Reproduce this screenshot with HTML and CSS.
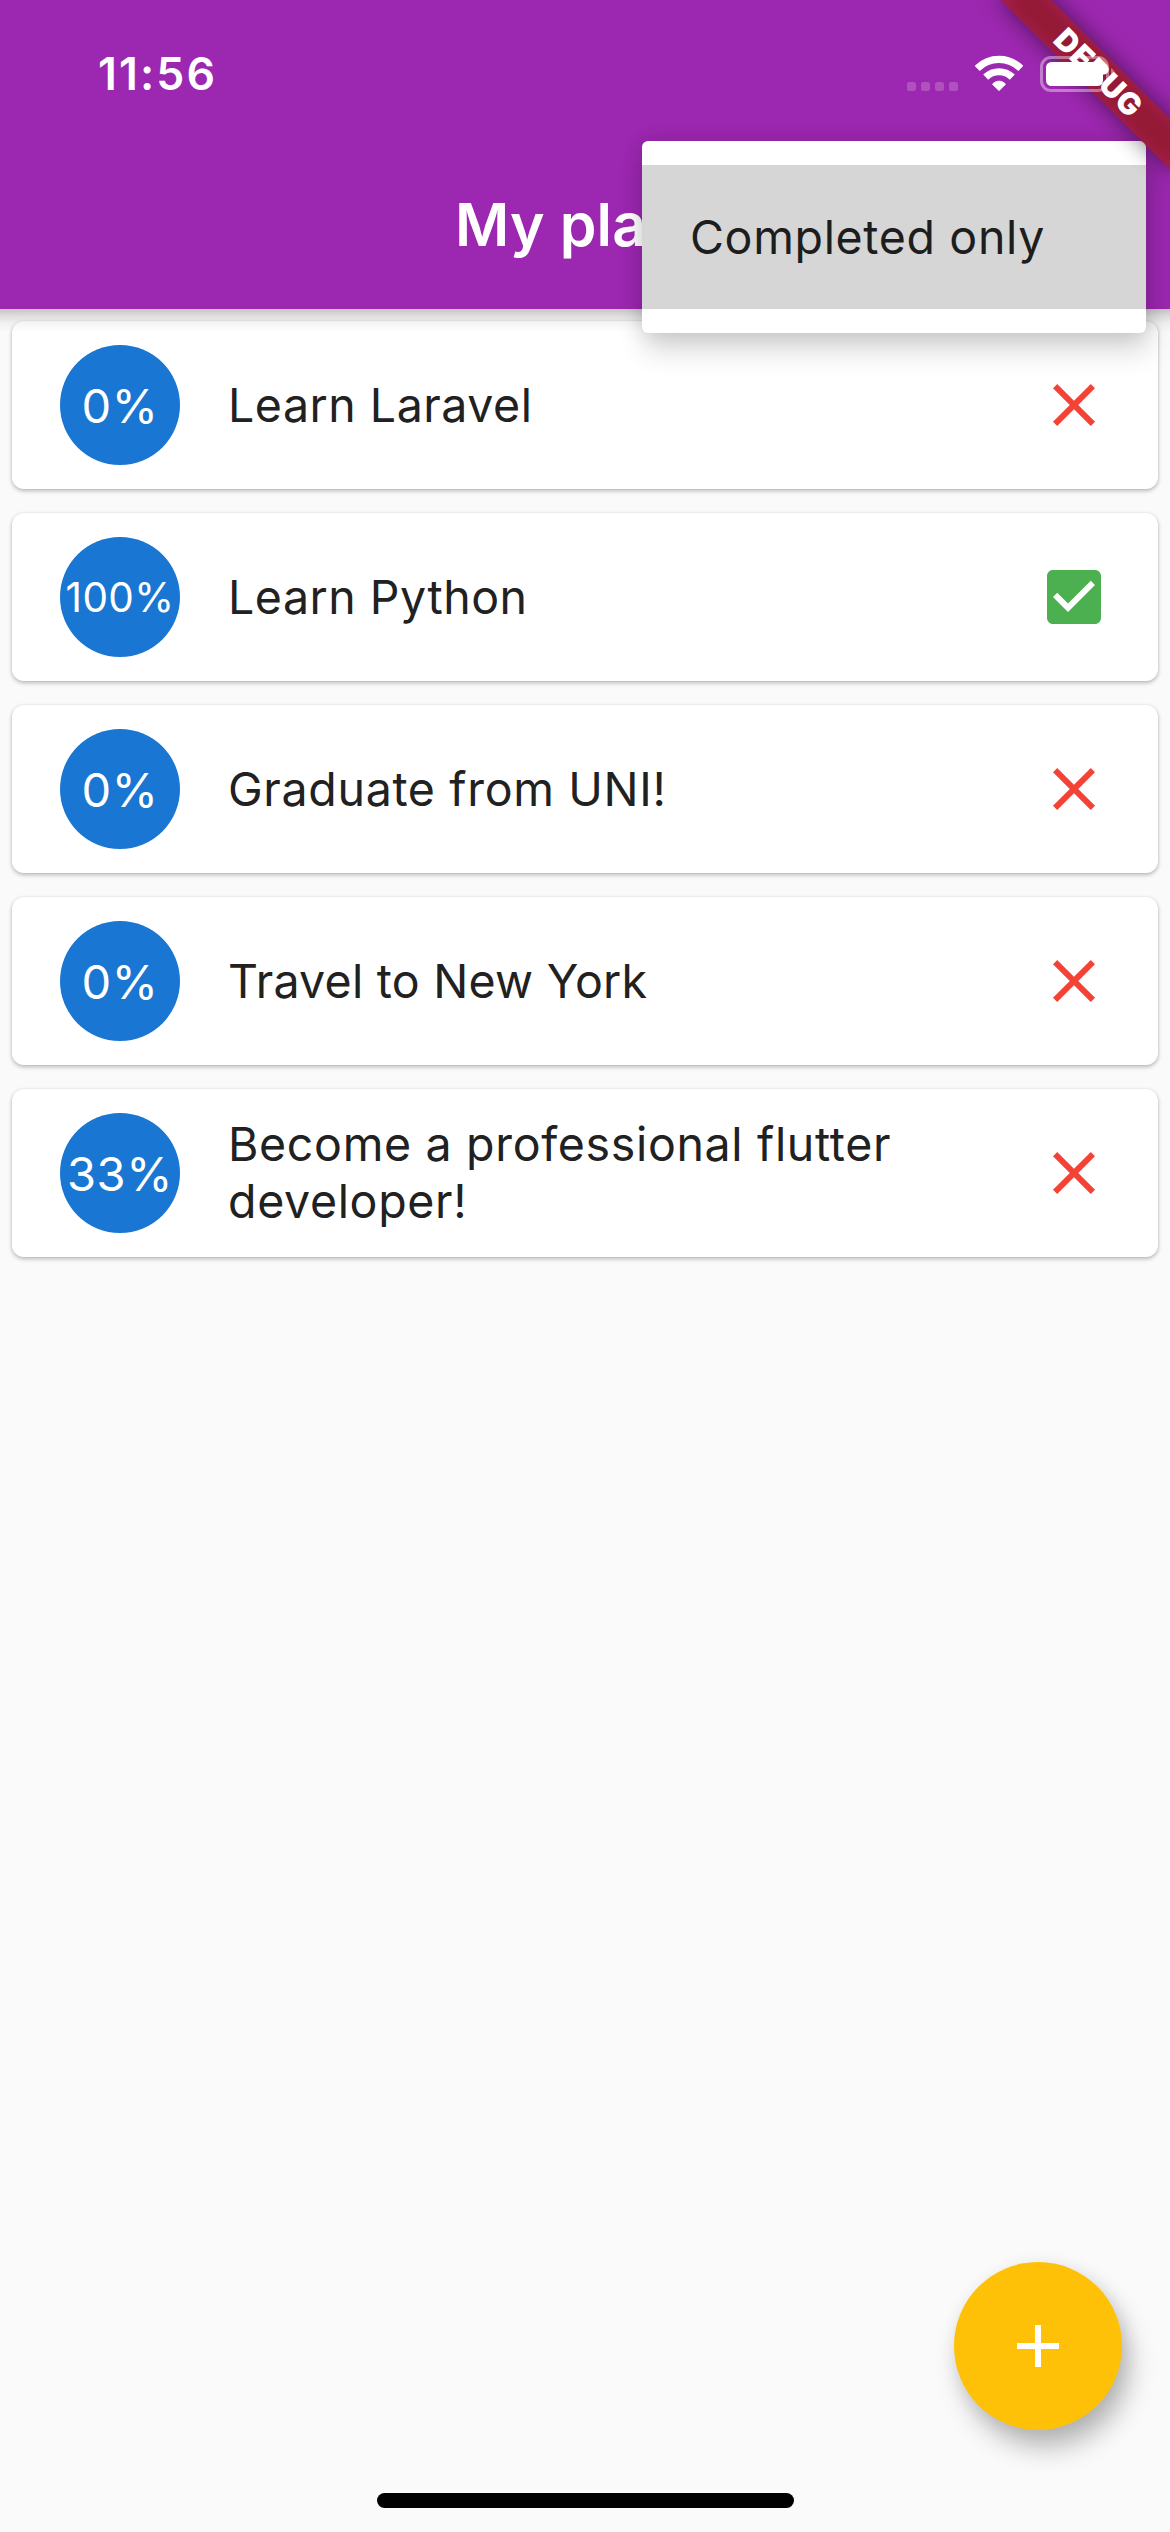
FILE: index.html
```html
<!DOCTYPE html>
<html lang="en">
<head>
<meta charset="utf-8">
<title>My plans</title>
<link rel="stylesheet" href="styles.css">
</head>
<body>
<div class="screen">
  <header class="app-bar">
    <div class="status-bar">
      <span class="time">11:56</span>
      <div class="indicators">
        <div class="signal"><i></i><i></i><i></i><i></i></div>
        <svg class="wifi" width="48" height="36" viewBox="0 0 48 36">
          <g fill="none" stroke="#fff" stroke-width="7.2">
            <path d="M2.2 13.4C14.5 1.4 33.5 1.4 45.8 13.4"/>
            <path d="M10.7 22.2C18.3 14.9 29.7 14.9 37.3 22.2"/>
          </g>
          <path d="M17.5 29.2C21.1 25.2 26.9 25.2 30.5 29.2L24 35.6Z" fill="#fff" stroke="#fff" stroke-width="1" stroke-linejoin="round"/>
        </svg>
        <svg class="battery" width="77" height="36" viewBox="0 0 77 36">
          <rect x="1.5" y="1.5" width="66" height="33" rx="9.5" fill="none" stroke="#fff" stroke-opacity=".4" stroke-width="3"/>
          <rect x="6" y="6" width="57" height="24" rx="5.5" fill="#fff"/>
          <path d="M71 12C76 14.500 76 21.500 71 24Z" fill="#fff" fill-opacity=".4"/>
        </svg>
      </div>
    </div>
    <div class="toolbar"><h1 class="title">My plans</h1></div>
  </header>

  <main class="plans">
    <article class="card">
      <div class="percent">0%</div>
      <p class="name">Learn Laravel</p>
      <svg class="mark open" viewBox="0 0 24 24"><path d="M19 6.410L17.590 5 12 10.590 6.410 5 5 6.410 10.590 12 5 17.590 6.410 19 12 13.410 17.590 19 19 17.590 13.410 12z"/></svg>
    </article>
    <article class="card">
      <div class="percent full">100%</div>
      <p class="name">Learn Python</p>
      <svg class="mark done" viewBox="0 0 24 24"><path d="M19 3H5c-1.110 0-2 .9-2 2v14c0 1.100.89 2 2 2h14c1.110 0 2-.9 2-2V5c0-1.100-.89-2-2-2zm-9 14l-5-5 1.410-1.410L10 14.170l7.590-7.590L19 8l-9 9z"/></svg>
    </article>
    <article class="card">
      <div class="percent">0%</div>
      <p class="name wide">Graduate from UNI!</p>
      <svg class="mark open" viewBox="0 0 24 24"><path d="M19 6.410L17.590 5 12 10.590 6.410 5 5 6.410 10.590 12 5 17.590 6.410 19 12 13.410 17.590 19 19 17.590 13.410 12z"/></svg>
    </article>
    <article class="card">
      <div class="percent">0%</div>
      <p class="name tight">Travel to New York</p>
      <svg class="mark open" viewBox="0 0 24 24"><path d="M19 6.410L17.590 5 12 10.590 6.410 5 5 6.410 10.590 12 5 17.590 6.410 19 12 13.410 17.590 19 19 17.590 13.410 12z"/></svg>
    </article>
    <article class="card">
      <div class="percent">33%</div>
      <p class="name wide">Become a professional flutter developer!</p>
      <svg class="mark open" viewBox="0 0 24 24"><path d="M19 6.410L17.590 5 12 10.590 6.410 5 5 6.410 10.590 12 5 17.590 6.410 19 12 13.410 17.590 19 19 17.590 13.410 12z"/></svg>
    </article>
  </main>

  <footer class="bottom">
    <button class="fab" aria-label="Add plan">
      <svg width="72" height="72" viewBox="0 0 24 24" fill="#fff"><path d="M19 13h-6v6h-2v-6H5v-2h6V5h2v6h6v2z"/></svg>
    </button>
    <div class="home-indicator"></div>
  </footer>

  <div class="menu"><div class="menu-item">Completed only</div></div>

  <div class="ribbon-corner">
    <div class="ribbon-shadow"></div>
    <div class="ribbon">DEBUG</div>
  </div>
</div>
</body>
</html>
```
FILE: styles.css
```css
* { box-sizing: border-box; }

body {
  margin: 0;
  font-family: Inter, "Liberation Sans", sans-serif;
  color: #212121;
}

.screen {
  position: relative;
  display: flex;
  flex-direction: column;
  width: 1170px;
  height: 2532px;
  overflow: hidden;
  background: #fafafa;
}

/* App bar */
.app-bar {
  display: flex;
  flex-direction: column;
  height: 309px;
  background: #9c27b0;
  color: #fff;
}

.app-bar::after {
  content: "";
  position: absolute;
  top: 309px;
  left: 0;
  right: 0;
  height: 24px;
  background: linear-gradient(rgba(0,0,0,.21), rgba(0,0,0,.11) 30%, rgba(0,0,0,.04) 58%, transparent);
  z-index: 1;
}

.status-bar {
  display: flex;
  justify-content: space-between;
  height: 141px;
  padding: 55px 54px 0 98px;
}

.time {
  height: 39px;
  font-size: 44.6px;
  font-weight: 600;
  line-height: 39px;
  letter-spacing: 2.1px;
}

.indicators {
  position: relative;
  display: flex;
  height: 37px;
  z-index: 4;
}

.signal {
  display: flex;
  gap: 5px;
  margin: 27px 17px 0 0;
}

.signal i {
  width: 9px;
  height: 9px;
  border-radius: 2.5px;
  background: rgba(255,255,255,.2);
}

.wifi { margin-right: 17px; }
.battery { margin-top: 1px; margin-right: -1px; }

.toolbar {
  display: flex;
  align-items: center;
  height: 168px;
  padding-left: 455px;
}

.title {
  margin: 0;
  font-size: 58.8px;
  font-weight: 600;
  letter-spacing: .2px;
  line-height: 72px;
}

/* Plans */
.plans {
  display: flex;
  flex-direction: column;
  gap: 24px;
  padding: 12px;
}

.card {
  display: flex;
  align-items: center;
  height: 168px;
  padding: 0 48px;
  border-radius: 12px;
  background: #fff;
  box-shadow: 0 2px 4px rgba(0,0,0,.26), 0 0 3px rgba(0,0,0,.08);
}

.percent {
  display: flex;
  flex: none;
  align-items: center;
  justify-content: center;
  width: 120px;
  height: 120px;
  margin-right: 48px;
  border-radius: 50%;
  background: #1976d2;
  color: #fff;
  font-size: 47px;
  letter-spacing: .6px;
}

.percent.full {
  font-size: 40.5px;
  letter-spacing: .4px;
}

.name {
  flex: 1;
  margin: 0;
  font-size: 46.5px;
  line-height: 57px;
  letter-spacing: .52px;
}

.name.wide { letter-spacing: .67px; }
.name.tight { letter-spacing: .25px; }

.mark {
  flex: none;
  width: 72px;
  height: 72px;
  margin-left: 36px;
}

.open { fill: #f44336; }
.done { fill: #4caf50; }

/* Bottom area */
.bottom {
  display: flex;
  flex-direction: column;
  margin-top: auto;
  padding-bottom: 24px;
}

.fab {
  display: flex;
  align-items: center;
  justify-content: center;
  align-self: flex-end;
  width: 168px;
  height: 168px;
  margin: 0 48px 63px 0;
  padding: 0;
  border: 0;
  border-radius: 50%;
  background: #ffc107;
  box-shadow: 8px 18px 26px rgba(0,0,0,.25), 3px 3px 18px rgba(0,0,0,.08);
}

.home-indicator {
  width: 417px;
  height: 15px;
  margin-left: 377px;
  border-radius: 7.5px;
  background: #000;
}

/* Popup menu */
.menu {
  position: absolute;
  top: 141px;
  left: 642px;
  width: 504px;
  padding: 24px 0;
  border-radius: 6px;
  background: #fff;
  box-shadow: 3px 17px 28px rgba(0,0,0,.16), 0 0 20px rgba(0,0,0,.12);
  z-index: 2;
}

.menu-item {
  height: 144px;
  padding-left: 48px;
  background: #d6d6d6;
  color: #1d1d1d;
  font-size: 46.5px;
  line-height: 144px;
  letter-spacing: .65px;
}

/* Corner ribbon */
.ribbon-corner {
  position: absolute;
  top: 0;
  right: 0;
  width: 240px;
  height: 240px;
  overflow: hidden;
  z-index: 3;
}

.ribbon,
.ribbon-shadow {
  position: absolute;
  top: 54px;
  left: 48px;
  width: 240px;
  height: 36px;
  transform: rotate(45deg);
}

.ribbon-shadow {
  background: rgba(0,0,0,.5);
  filter: blur(11.9px);
}

.ribbon {
  padding-left: 2px;
  background: rgba(183,28,28,.63);
  color: #fff;
  font-size: 30.6px;
  font-weight: 900;
  line-height: 36px;
  letter-spacing: .8px;
  text-align: center;
}
```
